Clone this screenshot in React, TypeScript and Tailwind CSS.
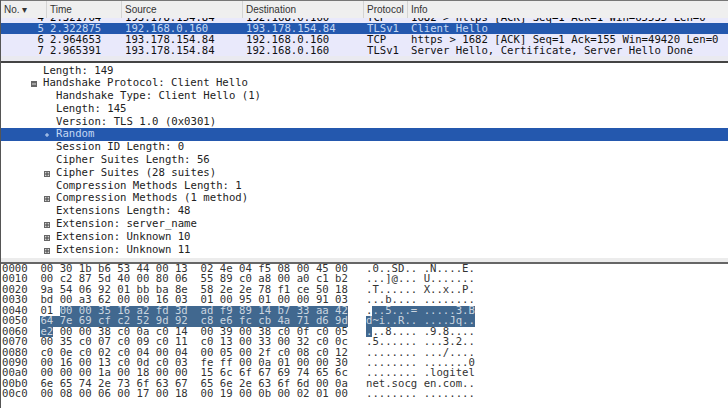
const MONO = "font-['DejaVu_Sans_Mono',monospace] text-[10.65px]";
const HEX_SELECTED = "inline-block h-[10.45px] align-top bg-[#41688f] text-[#c9d4df]";

const columns = [
  { label: "No. ▾", width: "w-[46px]" },
  { label: "Time", width: "w-[75px]" },
  { label: "Source", width: "w-[121px]" },
  { label: "Destination", width: "w-[121px]" },
  { label: "Protocol", width: "w-[44px]" },
  { label: "Info", width: "flex-1" },
];

const packets = [
  { no: "4", time: "2.321764", src: "193.178.154.84", dst: "192.168.0.160", proto: "TCP", info: "1682 > https [ACK] Seq=1 Ack=1 Win=65535 Len=0", bg: "bg-[#e9e9fb] text-black" },
  { no: "5", time: "2.322875", src: "192.168.0.160", dst: "193.178.154.84", proto: "TLSv1", info: "Client Hello", bg: "bg-[#2458ae] text-[#c4d8f4]" },
  { no: "6", time: "2.964653", src: "193.178.154.84", dst: "192.168.0.160", proto: "TCP", info: "https > 1682 [ACK] Seq=1 Ack=155 Win=49420 Len=0", bg: "bg-[#e9e9fb] text-[#111]" },
  { no: "7", time: "2.965391", src: "193.178.154.84", dst: "192.168.0.160", proto: "TLSv1", info: "Server Hello, Certificate, Server Hello Done", bg: "bg-[#e9e9fb] text-[#111]" },
];

const tree = [
  { text: "Length: 149", indent: 0 },
  { text: "Handshake Protocol: Client Hello", indent: 0, icon: "minus" },
  { text: "Handshake Type: Client Hello (1)", indent: 1 },
  { text: "Length: 145", indent: 1 },
  { text: "Version: TLS 1.0 (0x0301)", indent: 1 },
  { text: "Random", indent: 1, icon: "plus", selected: true },
  { text: "Session ID Length: 0", indent: 1 },
  { text: "Cipher Suites Length: 56", indent: 1 },
  { text: "Cipher Suites (28 suites)", indent: 1, icon: "plus" },
  { text: "Compression Methods Length: 1", indent: 1 },
  { text: "Compression Methods (1 method)", indent: 1, icon: "plus" },
  { text: "Extensions Length: 48", indent: 1 },
  { text: "Extension: server_name", indent: 1, icon: "plus" },
  { text: "Extension: Unknown 10", indent: 1, icon: "plus" },
  { text: "Extension: Unknown 11", indent: 1, icon: "plus" },
];

// before / selected / after, for the hex part and the ascii part
const hex: [string, string, string, string, string, string][] = [
  ["0000  00 30 1b b6 53 44 00 13  02 4e 04 f5 08 00 45 00", "", "", ".0..SD.. .N....E.", "", ""],
  ["0010  00 c2 87 5d 40 00 80 06  55 89 c0 a8 00 a0 c1 b2", "", "", "...]@... U.......", "", ""],
  ["0020  9a 54 06 92 01 bb ba 8e  58 2e 2e 78 f1 ce 50 18", "", "", ".T...... X..x..P.", "", ""],
  ["0030  bd 00 a3 62 00 00 16 03  01 00 95 01 00 00 91 03", "", "", "...b.... ........", "", ""],
  ["0040  01 ", "00 00 35 16 a2 fd 3d  ad f9 89 14 b7 33 aa 42", "", ".", "..5...= .....3.B", ""],
  ["0050  ", "64 7e 69 cf c2 52 9d 92  c8 e6 fc cb 4a 71 d6 9d", "", "", "d~i..R.. ....Jq..", ""],
  ["0060  ", "e2", " 00 00 38 c0 0a c0 14  00 39 00 38 c0 0f c0 05", "", ".", "..8.... .9.8...."],
  ["0070  00 35 c0 07 c0 09 c0 11  c0 13 00 33 00 32 c0 0c", "", "", ".5...... ...3.2..", "", ""],
  ["0080  c0 0e c0 02 c0 04 00 04  00 05 00 2f c0 08 c0 12", "", "", "........ .../....", "", ""],
  ["0090  00 16 00 13 c0 0d c0 03  fe ff 00 0a 01 00 00 30", "", "", "........ .......0", "", ""],
  ["00a0  00 00 00 1a 00 18 00 00  15 6c 6f 67 69 74 65 6c", "", "", "........ .logitel", "", ""],
  ["00b0  6e 65 74 2e 73 6f 63 67  65 6e 2e 63 6f 6d 00 0a", "", "", "net.socg en.com..", "", ""],
  ["00c0  00 08 00 06 00 17 00 18  00 19 00 0b 00 02 01 00", "", "", "........ ........", "", ""],
];

function Expander({ kind, selected }: { kind: string; selected?: boolean }) {
  if (selected) {
    return (
      <svg width="6" height="6" viewBox="0 0 6 6" className="block">
        <path d="M1 3h4M3 1v4" stroke="#c4d8f4" />
      </svg>
    );
  }
  return (
    <svg width="6" height="6" viewBox="0 0 6 6" className="block">
      <rect x="0.5" y="0.5" width="5" height="5" fill={kind === "minus" ? "#666" : "#d4d4d4"} stroke="#666" />
      <path d={kind === "minus" ? "M1 3h4" : "M1 3h4M3 1v4"} stroke={kind === "minus" ? "#ddd" : "#444"} />
    </svg>
  );
}

export default function App() {
  return (
    <div className="w-[728px] h-[408px] overflow-hidden flex flex-col bg-[#e4e4e4] border-l border-[#555]">
      {/* Packet list */}
      <div className="h-[63px] shrink-0 flex flex-col overflow-hidden border-t border-[#777] border-b-2 border-b-[#444] bg-[#eaeaf0]">
        <div className="h-[17px] shrink-0 flex bg-[#efefef] font-['Liberation_Sans',sans-serif] text-[10px] leading-[18px] text-[#333]">
          {columns.map((c) => (
            <div key={c.label} className={`${c.width} pl-[3px] border-r border-[#d4d4d4] last:border-r-0`}>
              {c.label}
            </div>
          ))}
        </div>
        <div className={`${MONO} h-[39px] overflow-hidden leading-[11px]`}>
          <div className="-mt-[6px]">
            {packets.map((p) => (
              <div key={p.no} className={`flex h-[11px] whitespace-pre ${p.bg}`}>
                <div className="w-[46px] text-right pr-[3px]">{p.no}</div>
                <div className="w-[75px] pl-[3px]">{p.time}</div>
                <div className="w-[121px] pl-[3px]">{p.src}</div>
                <div className="w-[121px] pl-[3px]">{p.dst}</div>
                <div className="w-[44px] pl-[3px]">{p.proto}</div>
                <div className="flex-1 pl-[3px]">{p.info}</div>
              </div>
            ))}
          </div>
        </div>
      </div>

      {/* Packet details */}
      <div className={`${MONO} h-[195px] shrink-0 bg-white overflow-hidden pt-[1.5px] text-[#222] leading-[12.8px]`}>
        {tree.map((row) => (
          <div
            key={row.text}
            className={`relative h-[12.8px] whitespace-pre ${row.indent ? "pl-[55px]" : "pl-[42px]"} ${row.selected ? "bg-[#2458ae] text-[#c4d8f4]" : ""}`}
          >
            {row.icon && (
              <span className={`absolute top-[4px] ${row.indent ? "left-[43px]" : "left-[30px]"}`}>
                <Expander kind={row.icon} selected={row.selected} />
              </span>
            )}
            {row.text}
          </div>
        ))}
      </div>

      {/* Splitter */}
      <div className="h-[6px] shrink-0 bg-[#ececec] border-b-2 border-[#666]" />

      {/* Hex dump */}
      <div className={`${MONO} flex-1 bg-white overflow-hidden pl-[1px] text-[#333] leading-[10.45px]`}>
        {hex.map((r) => (
          <div key={r[0]} className="h-[10.45px] whitespace-pre flex">
            <div className="w-[364px] shrink-0">
              {r[0]}
              {r[1] && <span className={HEX_SELECTED}>{r[1]}</span>}
              {r[2]}
            </div>
            <div>
              {r[3]}
              {r[4] && <span className={HEX_SELECTED}>{r[4]}</span>}
              {r[5]}
            </div>
          </div>
        ))}
      </div>
    </div>
  );
}
